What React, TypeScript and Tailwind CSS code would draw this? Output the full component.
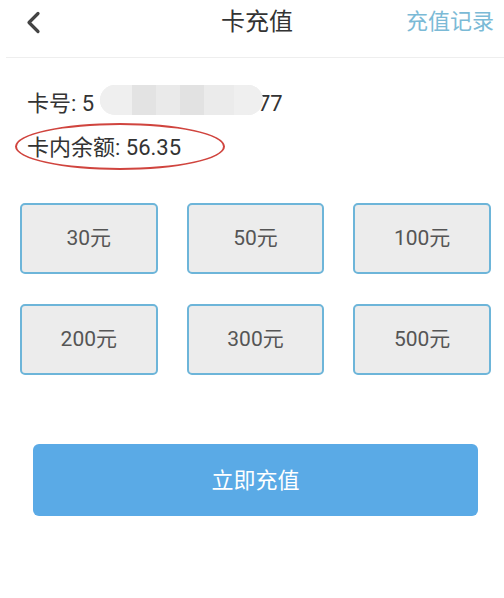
const amounts = ["30元", "50元", "100元", "200元", "300元", "500元"];

export default function App() {
  return (
    <div
      className="w-[504px] h-[598px] bg-white text-[#333] overflow-hidden"
      style={{ fontFamily: 'Roboto, "Noto Sans CJK SC", sans-serif' }}
    >
      {/* header */}
      <header className="relative h-[58px] border-b border-[#eeeeee] ml-[6px]">
        <button className="absolute left-[18px] top-[10px] w-[18px] h-[24px] flex items-center justify-center">
          <svg width="16" height="23" viewBox="0 0 16 23" fill="none">
            <path d="M13 2.5 L4 11.5 L13 20.5" stroke="#444" strokeWidth="3.2" strokeLinecap="round" strokeLinejoin="round" />
          </svg>
        </button>
        <h1 className="absolute left-[251px] -translate-x-1/2 top-[5px] text-[24px] text-[#333] font-normal leading-[34px]">
          卡充值
        </h1>
        <span className="absolute right-[10px] top-[6px] text-[22px] text-[#7bbad6] leading-[32px]">充值记录</span>
      </header>

      {/* card info */}
      <div className="px-[27px] pt-[27px]">
        <div className="relative h-[36px] flex items-center text-[22px] text-[#333]">
          <span>卡号: 5</span>
          <span className="absolute left-[231px]">77</span>
          <div className="absolute left-[73px] top-[0px] w-[163px] h-[30px] rounded-[15px] bg-[#ededed] overflow-hidden flex">
            <div className="w-[32px] bg-[#efefef]" />
            <div className="w-[24px] bg-[#e3e3e3]" />
            <div className="w-[24px] bg-[#eaeaea]" />
            <div className="w-[24px] bg-[#e2e2e2]" />
            <div className="w-[30px] bg-[#ebebeb]" />
            <div className="flex-1 bg-[#efefef]" />
          </div>
        </div>
        <div className="relative mt-[8px] h-[36px] flex items-center text-[22px] text-[#333]">
          <span>卡内余额: 56.35</span>
          <div className="absolute left-[-12px] top-[-6px] w-[210px] h-[47px] rounded-[50%] border-[2px] border-[#d0443e]" />
        </div>
      </div>

      {/* amounts */}
      <div className="grid grid-cols-3 gap-x-[29px] gap-y-[30px] px-[20px] pr-[13px] mt-[38px]">
        {amounts.map((a) => (
          <button
            key={a}
            className="h-[71px] rounded-[5px] border-[2px] border-[#6db5d9] bg-[#ececec] text-[21px] text-[#555] flex items-center justify-center"
          >
            {a}
          </button>
        ))}
      </div>

      {/* submit */}
      <div className="px-[33px] pr-[26px] mt-[69px]">
        <button className="w-full h-[72px] rounded-[6px] bg-[#5aaae6] text-white text-[22px] flex items-center justify-center">
          立即充值
        </button>
      </div>
    </div>
  );
}
